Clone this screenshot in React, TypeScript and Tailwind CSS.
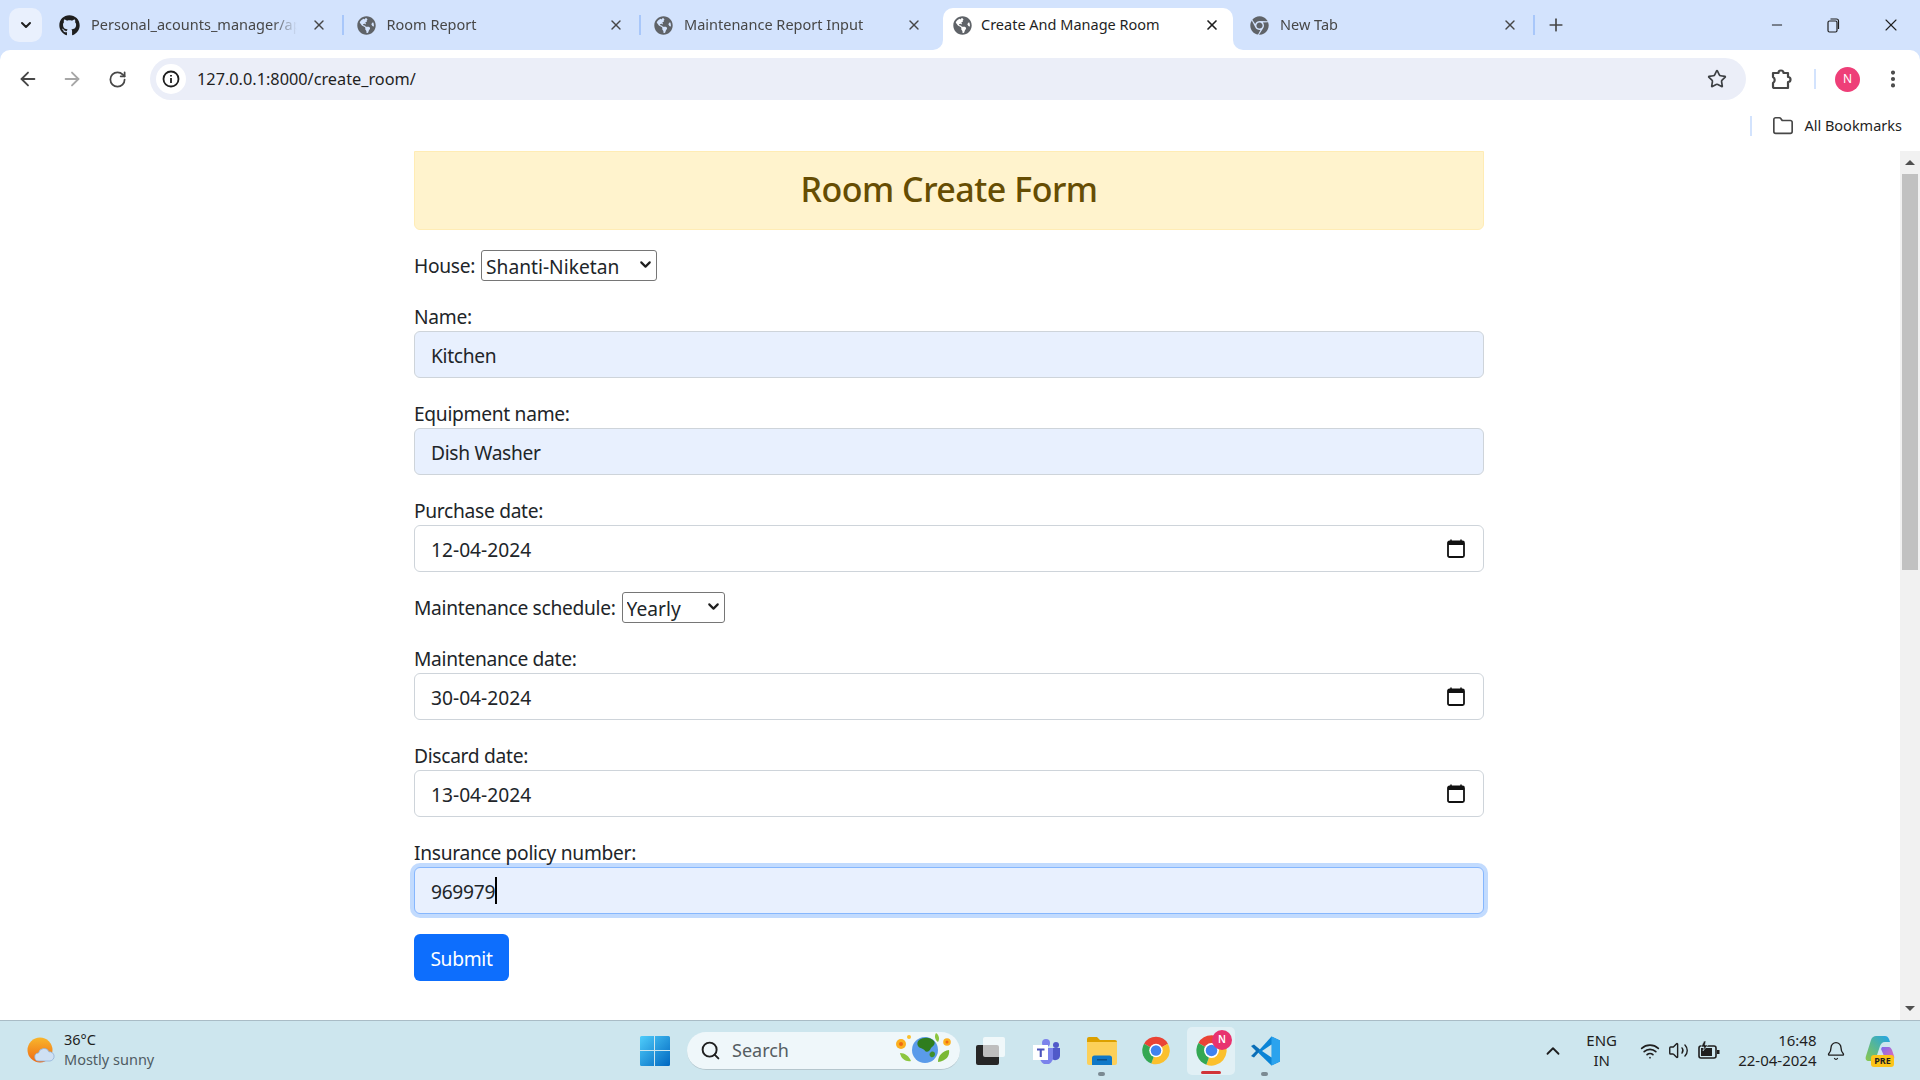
import type { ReactNode } from "react"
import {
  ArrowLeft, ArrowRight, Bell, ChevronDown, ChevronUp, EllipsisVertical, Folder, Minus, Plus,
  RotateCw, Search, Star, Volume2, Wifi, X,
} from "lucide-react"
import { FaChrome, FaGithub, FaGlobeAmericas } from "react-icons/fa"

// Tira de pestañas
function Tab({ icon, title, active, sep }: { icon: ReactNode; title: string; active?: boolean; sep?: boolean }) {
  if (active) {
    return (
      <div className="relative flex items-center h-[42px] w-[290px] ml-[4.5px] mt-[8px] pl-[10px] pb-[8px] bg-white rounded-t-[10px]">
        <div className="absolute -left-[10px] bottom-0 w-[10px] h-[10px] bg-white">
          <div className="w-full h-full bg-[#d3e3fd] rounded-br-[10px]" />
        </div>
        <div className="absolute -right-[10px] bottom-0 w-[10px] h-[10px] bg-white">
          <div className="w-full h-full bg-[#d3e3fd] rounded-bl-[10px]" />
        </div>
        {icon}
        <span className="ml-[9px] flex-1 text-[14.500px] text-[#1f1f1f] whitespace-nowrap">{title}</span>
        <X size={16} strokeWidth={2.5} className="text-[#1f1f1f] mr-[13px]" />
      </div>
    )
  }
  return (
    <div className="flex items-center h-[34px] w-[297.5px] mt-[8px] pl-[13px]">
      {icon}
      <span className="ml-[11px] flex-1 min-w-0 overflow-hidden text-[14.500px] text-[#474747] whitespace-nowrap [mask-image:linear-gradient(to_right,black_88%,transparent)]">{title}</span>
      <X size={16} strokeWidth={2} className="ml-[14px] text-[#474747] shrink-0" />
      <div className={`ml-[15px] w-[2px] h-[20px] shrink-0 ${sep ? "bg-[#a8c7fa]" : "bg-transparent"}`} />
    </div>
  )
}

function ChromeLogo({ size }: { size: number }) {
  return (
    <svg width={size} height={size} viewBox="0 0 24 24">
      <path d="M12 12 L2.47 6.5 A11 11 0 0 1 21.53 6.5 Z" fill="#ea4335" />
      <path d="M12 12 L21.53 6.5 A11 11 0 0 1 8.24 22.34 Z" fill="#fbc02d" />
      <path d="M12 12 L8.24 22.34 A11 11 0 0 1 2.47 6.5 Z" fill="#34a853" />
      <circle cx="12" cy="12" r="5.4" fill="#fff" />
      <circle cx="12" cy="12" r="4.2" fill="#3f82f0" />
    </svg>
  )
}

function CalendarIcon() {
  return (
    <svg width="18" height="19" viewBox="0 0 18 19" className="shrink-0">
      <path d="M4 0.5v3M14 0.5v3" stroke="#111" strokeWidth="1.5" />
      <rect x="1" y="2.5" width="16" height="15.5" rx="1.5" fill="#fff" stroke="#111" strokeWidth="1.8" />
      <rect x="1" y="2.5" width="16" height="3.5" fill="#111" />
    </svg>
  )
}

function Label({ children }: { children: ReactNode }) {
  return <label className="block h-[29px] leading-[29px]">{children}</label>
}

const CONTROL = "flex items-center w-full h-[47px] px-[16px] border border-[#ced4da] rounded-[6px]"

function TextField({ label, value }: { label: string; value: string }) {
  return (
    <div className="mb-[21px]">
      <Label>{label}</Label>
      <div className={`${CONTROL} bg-[#e8f0fe]`}>
        <input defaultValue={value} className="w-full pt-[3px] bg-transparent outline-none" />
      </div>
    </div>
  )
}

function DateField({ label, value, className }: { label: string; value: string; className: string }) {
  return (
    <div className={className}>
      <Label>{label}</Label>
      <div className={`${CONTROL} pr-[18px] bg-white`}>
        <input defaultValue={value} className="flex-1 pt-[3px] bg-transparent outline-none tracking-normal" />
        <CalendarIcon />
      </div>
    </div>
  )
}

function SelectBox({ value, className }: { value: string; className: string }) {
  return (
    <div className={`relative ml-[6px] h-[31px] ${className}`}>
      <select className="w-full h-full pl-[4px] pt-[2px] appearance-none border border-[#767676] rounded-[3px] bg-white tracking-normal">
        <option>{value}</option>
      </select>
      <ChevronDown size={17} strokeWidth={3} className="absolute right-[3px] top-[6px] text-[#1f1f1f] pointer-events-none" />
    </div>
  )
}

function TaskIcon({ children, className }: { children: ReactNode; className: string }) {
  return <div className={`relative flex items-center justify-center h-[48px] ${className}`}>{children}</div>
}

export default function App() {
  return (
    <div className="flex flex-col h-screen w-screen overflow-hidden bg-[#d3e3fd] font-['Noto_Sans',sans-serif] text-[#212529]">

      {/* Pestañas */}
      <div className="flex h-[50px] shrink-0 pl-[9px]">
        <div className="flex items-center justify-center w-[33px] h-[34px] mt-[8px] mr-[4px] rounded-[10px] bg-[#e9f0fd]">
          <ChevronDown size={16} strokeWidth={3} className="text-[#1f1f1f]" />
        </div>
        <Tab sep icon={<FaGithub size={21} className="text-[#1f1f1f] shrink-0" />} title="Personal_acounts_manager/ap" />
        <Tab sep icon={<FaGlobeAmericas size={19} className="text-[#5f6368] shrink-0" />} title="Room Report" />
        <Tab icon={<FaGlobeAmericas size={19} className="text-[#5f6368] shrink-0" />} title="Maintenance Report Input" />
        <Tab active icon={<FaGlobeAmericas size={19} className="text-[#5f6368] shrink-0" />} title="Create And Manage Room" />
        <div className="ml-[4px]">
          <Tab sep icon={<FaChrome size={19} className="text-[#5f6368] shrink-0" />} title="New Tab" />
        </div>
        <Plus size={20} strokeWidth={2} className="mt-[15px] ml-[11px] text-[#474747]" />
        <div className="flex ml-auto mt-[15px] h-[20px] items-center text-[#1f1f1f]">
          <Minus size={16} strokeWidth={1.5} className="mr-[40px]" />
          <svg width="16" height="16" viewBox="0 0 16 16" fill="none" stroke="currentColor" strokeWidth="1.2" className="mr-[40px]">
            <rect x="3" y="4" width="9" height="11" rx="1.5" />
            <path d="M5.5 2h6a2 2 0 0 1 2 2v8" />
          </svg>
          <X size={20} strokeWidth={1.3} className="mr-[19px]" />
        </div>
      </div>

      {/* Barra de direcciones */}
      <div className="flex items-center h-[63px] shrink-0 bg-white rounded-t-[10px] pb-[5px] text-[#474747]">
        <ArrowLeft size={22} strokeWidth={2} className="ml-[17px]" />
        <ArrowRight size={22} strokeWidth={2} className="ml-[22px] text-[#a6a6a6]" />
        <RotateCw size={19} strokeWidth={2.2} className="ml-[25px]" />
        <div className="flex items-center ml-[23px] w-[1596px] h-[42px] rounded-full bg-[#ebeef8]">
          <div className="flex items-center justify-center ml-[6px] w-[30px] h-[30px] rounded-full bg-white">
            <svg width="18" height="18" viewBox="0 0 18 18" fill="none" stroke="#1f1f1f" strokeWidth="1.8">
              <circle cx="9" cy="9" r="7.5" />
              <path d="M9 8v5M9 5v1.6" />
            </svg>
          </div>
          <span className="ml-[11px] text-[16.300px] text-[#1f1f1f]">127.0.0.1:8000/create_room/</span>
          <Star size={20} strokeWidth={2} className="ml-auto mr-[19px] text-[#3c3f43]" />
        </div>
        <svg width="24" height="24" viewBox="0 0 24 24" fill="none" stroke="#474747" strokeWidth="2.2" strokeLinejoin="round" className="ml-[23px]">
          <path d="M4 6h5.5a2.5 2.5 0 0 1 5 0H19v4a2.5 2.5 0 0 1 0 5v6H5.5a1.5 1.5 0 0 1-1.5-1.5V16a3.5 3.5 0 0 0 0-6Z" />
        </svg>
        <div className="ml-[21px] w-[2px] h-[20px] bg-[#d3e3fd]" />
        <div className="flex items-center justify-center ml-[19px] w-[25px] h-[25px] rounded-full bg-[#ee3f78] text-white text-[12px]">N</div>
        <EllipsisVertical size={22} strokeWidth={2.5} className="ml-[22px]" />
      </div>

      {/* Marcadores */}
      <div className="flex items-center justify-end h-[38px] shrink-0 bg-white pb-[17px] pt-[4px]">
        <div className="w-[2px] h-[20px] bg-[#d3e3fd]" />
        <Folder size={22} strokeWidth={1.8} className="ml-[20px] text-[#474747]" />
        <span className="ml-[10px] mr-[18px] text-[14.500px] text-[#1f1f1f]">All Bookmarks</span>
      </div>

      {/* Página */}
      <div className="flex flex-1 min-h-0 bg-white">
        <main className="flex-1 min-w-0">
          <div className="ml-[414px] w-[1070px] text-[19.2px] tracking-[-0.3px]">
            <div className="flex items-center justify-center h-[79px] mb-[20px] pb-[2px] bg-[#fff3cd] border border-[#ffecb5] rounded-b-[6px] text-[#664d03] text-[34px] tracking-[-0.5px] font-medium">
              Room Create Form
            </div>

            <div className="flex items-center h-[31px] mb-[21px]">
              <span className="pt-[2px]">House:</span>
              <SelectBox value="Shanti-Niketan" className="w-[176px]" />
            </div>

            <TextField label="Name:" value="Kitchen" />
            <TextField label="Equipment name:" value="Dish Washer" />
            <DateField label="Purchase date:" value="12-04-2024" className="mb-[20px]" />

            <div className="flex items-center h-[31px] mb-[21px]">
              <span className="pt-[2px]">Maintenance schedule:</span>
              <SelectBox value="Yearly" className="w-[103px]" />
            </div>

            <DateField label="Maintenance date:" value="30-04-2024" className="mb-[21px]" />
            <DateField label="Discard date:" value="13-04-2024" className="mb-[21px]" />

            <div className="mb-[20px]">
              <Label>Insurance policy number:</Label>
              <div className="flex items-center w-full h-[47px] px-[16px] bg-[#e8f0fe] border border-[#86b7fe] rounded-[6px] shadow-[0_0_0_4px_rgba(13,110,253,0.25)]">
                <span className="pt-[3px]">969979</span>
                <div className="w-[2px] h-[27px] bg-black" />
              </div>
            </div>

            <button className="w-[95px] h-[47px] pt-[3px] bg-[#0d6efd] text-white rounded-[6px]">Submit</button>
          </div>
        </main>

        {/* Scrollbar */}
        <div className="flex flex-col items-center w-[20px] shrink-0 bg-[#f1f1f1]">
          <div className="flex items-center justify-center h-[23px] w-full">
            <div className="w-0 h-0 border-x-[5px] border-x-transparent border-b-[5px] border-b-[#505050]" />
          </div>
          <div className="w-[16px] h-[396px] bg-[#c1c1c1]" />
          <div className="flex items-center justify-center h-[23px] w-full mt-auto">
            <div className="w-0 h-0 border-x-[5px] border-x-transparent border-t-[5px] border-t-[#505050]" />
          </div>
        </div>
      </div>

      {/* Barra de tareas */}
      <div className="flex items-center h-[60px] shrink-0 bg-[#cde6ee] border-t border-[#a9bcc6]">
        <svg width="28" height="28" viewBox="0 0 28 28" className="ml-[27px] shrink-0">
          <defs>
            <linearGradient id="sun" x1="0" y1="0" x2="0" y2="1">
              <stop offset="0" stopColor="#f8b62c" />
              <stop offset="1" stopColor="#f06a14" />
            </linearGradient>
          </defs>
          <circle cx="13" cy="13" r="12.5" fill="url(#sun)" />
          <path d="M12 24a4 4 0 0 1-.5-8 5.5 5.5 0 0 1 10.4-1.2A4.6 4.6 0 0 1 23 24Z" fill="#cfe0f3" stroke="#8fb0d8" strokeWidth="0.8" />
        </svg>
        <div className="ml-[9px] mb-[4px] w-[100px] text-[14.500px] leading-[20px]">
          <div className="text-[#1f1f1f]">36°C</div>
          <div className="text-[#4f5b62] whitespace-nowrap">Mostly sunny</div>
        </div>

        <svg width="30" height="30" viewBox="0 0 30 30" className="ml-[476px] shrink-0">
          <defs>
            <linearGradient id="win" x1="0" y1="0" x2="1" y2="1">
              <stop offset="0" stopColor="#4fcdfb" />
              <stop offset="1" stopColor="#0067c0" />
            </linearGradient>
          </defs>
          <path d="M0 1.5A1.5 1.5 0 0 1 1.5 0H14v14H0ZM15 0h13.5A1.5 1.5 0 0 1 30 1.5V14H15ZM0 15h14v15H1.5A1.5 1.5 0 0 1 0 28.5ZM15 15h15v13.5a1.5 1.5 0 0 1-1.5 1.5H15Z" fill="url(#win)" />
        </svg>

        <div className="flex items-center ml-[17px] w-[273px] h-[38px] rounded-full bg-[#eff7fa] border-b border-[#b5c6cd] shrink-0">
          <Search size={21} strokeWidth={2.2} className="ml-[13px] text-[#1f1f1f]" />
          <span className="ml-[11px] text-[18px] text-[#555d62]">Search</span>
          <svg width="58" height="36" viewBox="0 0 58 36" className="ml-auto mr-[7px]">
            <circle cx="30" cy="18" r="13" fill="#5a9bea" />
            <path d="M24 8c5-3 11-3 15 1 2 3-1 5-3 7-1 3-4 5-6 3-1-3-5-2-7-5-1-2-1-4 1-6Z" fill="#2f7d1f" />
            <path d="M36 20c2-1 4 0 4 2s-2 4-4 3-2-4 0-5Z" fill="#3f8f2a" />
            <circle cx="6" cy="12" r="5" fill="#fbb01f" />
            <circle cx="6" cy="12" r="2" fill="#f06a14" />
            <circle cx="14" cy="5" r="2" fill="#fbc02d" />
            <circle cx="52" cy="10" r="3.8" fill="#fbb01f" />
            <circle cx="52" cy="10" r="1.5" fill="#f06a14" />
            <path d="M5 21c5 0 9 3 11 8-5 1-10-2-11-8Z" fill="#8cc63f" />
            <path d="M41 1c3 2 4 6 2 9-3-2-4-6-2-9Z" fill="#8cc63f" />
            <path d="M54 18c1 6-3 11-11 12 0-6 4-11 11-12Z" fill="#7ab934" />
          </svg>
        </div>

        <TaskIcon className="w-[29px] ml-[16px]">
          <div className="absolute left-0 bottom-[10px] w-[23px] h-[20px] rounded-[2px] bg-[#262626]" />
          <div className="absolute right-0 top-[10px] w-[22px] h-[20px] rounded-[2px] bg-white/70" />
        </TaskIcon>

        <TaskIcon className="w-[28px] ml-[28px]">
          <svg width="28" height="26" viewBox="0 0 28 26">
            <circle cx="13" cy="5" r="4" fill="#7b83eb" />
            <circle cx="23" cy="7" r="3" fill="#5059c9" />
            <path d="M18 10h9v8a5 5 0 0 1-9 2Z" fill="#5059c9" />
            <path d="M7 10h13v10a6.500 6.500 0 0 1-13 0Z" fill="#7b83eb" />
            <rect x="0" y="7" width="15" height="15" fill="#fff" />
            <path d="M4 10.500h7.500v2H8.800V19H6.700v-6.500H4Z" fill="#4b53bc" />
          </svg>
        </TaskIcon>

        <TaskIcon className="w-[30px] ml-[26px]">
          <svg width="30" height="28" viewBox="0 0 30 28">
            <path d="M0 2a2 2 0 0 1 2-2h8l3 3h15a2 2 0 0 1 2 2v4H0Z" fill="#dca000" />
            <path d="M0 5h30v21a2 2 0 0 1-2 2H2a2 2 0 0 1-2-2Z" fill="#fcd05a" />
            <path d="M5 28v-7a2.500 2.500 0 0 1 2.500-2.500h15A2.500 2.500 0 0 1 25 21v7Z" fill="#0f78c8" />
            <rect x="10" y="22" width="10" height="1.500" fill="#0b4f88" />
          </svg>
          <div className="absolute -bottom-[1px] left-[11px] w-[7px] h-[4px] rounded-full bg-[#7a8a92]" />
        </TaskIcon>

        <TaskIcon className="w-[30px] ml-[24px]">
          <ChromeLogo size={33} />
        </TaskIcon>

        <TaskIcon className="w-[48px] ml-[16px] rounded-[5px] bg-white/40">
          <ChromeLogo size={33} />
          <div className="absolute right-[3px] top-[3px] flex items-center justify-center w-[20px] h-[20px] rounded-full bg-[#e8326f] text-white text-[10px] font-semibold">N</div>
          <div className="absolute bottom-[1px] left-[14px] w-[20px] h-[3px] rounded-full bg-[#d13438]" />
        </TaskIcon>

        <TaskIcon className="w-[30px] ml-[15px]">
          <svg width="30" height="30" viewBox="0 0 30 30">
            <path d="M21.500 0.500 30 4.500v21l-8.500 4-14-13.500 14-15.500Z" fill="#0a84d6" />
            <path d="M21.500 0.500 30 4.500v21l-8.500 4Z" fill="#2ba3ee" />
            <path d="M21.500 8.500v13L12 15Z" fill="#cde6ee" />
            <path d="M1 10l3-1.500 6 5-1.500 3L4 21.500 1 20l5-5Z" fill="#0a6fb8" />
          </svg>
          <div className="absolute -bottom-[1px] left-[11px] w-[7px] h-[4px] rounded-full bg-[#7a8a92]" />
        </TaskIcon>

        <div className="flex items-center ml-auto">
          <ChevronUp size={22} strokeWidth={2} className="text-[#1f1f1f]" />
          <div className="ml-[18px] mb-[2px] w-[40px] text-center text-[15px] leading-[20px] text-[#1f1f1f]">
            <div>ENG</div>
            <div>IN</div>
          </div>
          <Wifi size={20} strokeWidth={2} className="ml-[18px] text-[#1f1f1f]" />
          <Volume2 size={21} strokeWidth={1.6} className="ml-[8px] text-[#1f1f1f]" />
          <svg width="22" height="20" viewBox="0 0 22 20" className="ml-[9px]">
            <rect x="1" y="5" width="17" height="12" rx="2" fill="none" stroke="#1f1f1f" strokeWidth="1.6" />
            <rect x="3" y="7" width="11" height="8" fill="#1f1f1f" />
            <rect x="19" y="9" width="2.500" height="4" fill="#1f1f1f" />
            <path d="M6 0 3 6h3L5 10l5-6H7l1-4Z" fill="#1f1f1f" stroke="#cde6ee" strokeWidth="0.6" />
          </svg>
          <div className="ml-[18.500px] mb-[2px] text-right text-[15px] leading-[20px] text-[#1f1f1f] whitespace-nowrap">
            <div>16:48</div>
            <div>22-04-2024</div>
          </div>
          <Bell size={20} strokeWidth={1.6} className="ml-[9px] text-[#1f1f1f]" />
          <div className="relative ml-[19.500px] mr-[25px] w-[30px] h-[32px]">
            <svg width="30" height="26" viewBox="0 0 30 26">
              <defs>
                <linearGradient id="copA" x1="0" y1="1" x2="1" y2="0">
                  <stop offset="0" stopColor="#8ac84a" />
                  <stop offset="1" stopColor="#1fa3ea" />
                </linearGradient>
                <linearGradient id="copB" x1="0" y1="0" x2="1" y2="1">
                  <stop offset="0" stopColor="#7a6cf0" />
                  <stop offset="1" stopColor="#f06ab0" />
                </linearGradient>
              </defs>
              <path d="M17 12h7c1 0 2 1 3 3l2 6c1 3-1 5-4 5h-8c3-1 3-3 2-5l-3-7Z" fill="url(#copB)" />
              <path d="M11 1h9c2 0 3 1 4 3l1 3h-5c-3 0-4 2-5 4l-4 12c-1 2-2 3-4 3H4c-3 0-4-2-3-5l5-16C7 2 9 1 11 1Z" fill="url(#copA)" />
            </svg>
            <div className="absolute left-[6px] bottom-0 w-[23px] h-[12px] rounded-[3px] bg-[#fcc419] text-[#1f1f1f] text-[9px] leading-[12px] text-center font-bold">PRE</div>
          </div>
        </div>
      </div>
    </div>
  )
}
